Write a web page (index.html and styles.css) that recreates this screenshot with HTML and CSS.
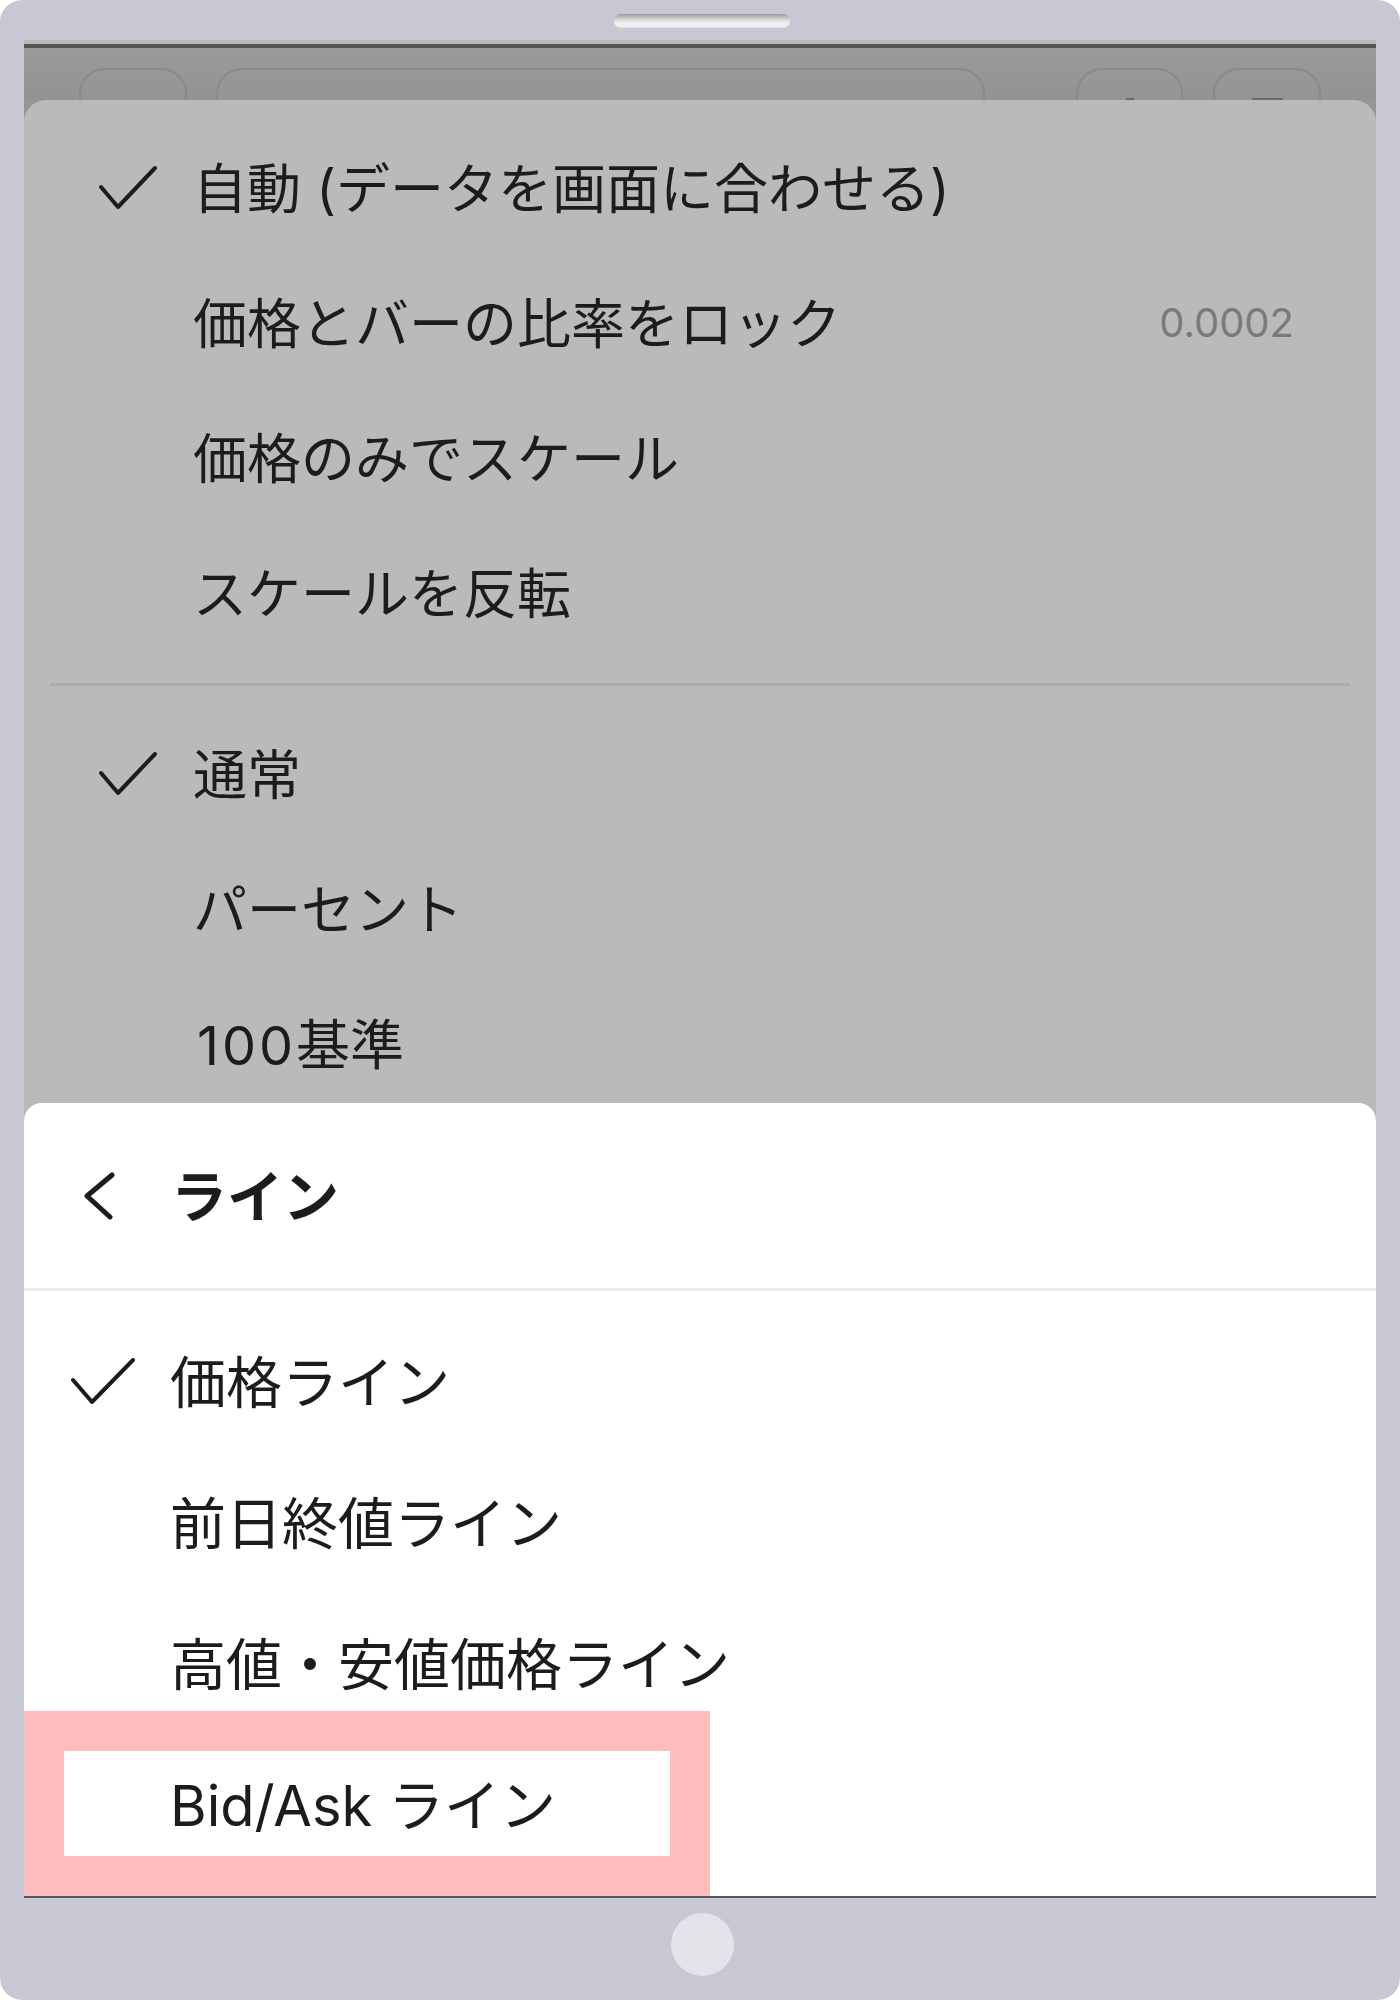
FILE: index.html
```html
<!DOCTYPE html>
<html lang="ja">
<head>
<meta charset="utf-8">
<title>ライン</title>
<link rel="stylesheet" href="styles.css">
</head>
<body>
<div class="device">
  <div class="speaker"></div>
  <div class="screen">
    <div class="status"></div>
    <div class="appbar">
      <div class="abtn"></div>
      <div class="abtn abtn-wide"></div>
      <div class="abtn abtn-push"><span class="mark mark-v"></span></div>
      <div class="abtn abtn-last"><span class="mark mark-h"></span></div>
    </div>
    <div class="panel">
      <div class="row">
        <span class="chk"><svg viewBox="0 0 58 45" width="58" height="45"><path d="M2 22 L19 42 L56 3" fill="none" stroke="#1c1c1c" stroke-width="4" stroke-linecap="round" stroke-linejoin="round"/></svg></span>
        <span class="label">自動 (データを画面に合わせる)</span>
      </div>
      <div class="row">
        <span class="chk"></span>
        <span class="label">価格とバーの比率をロック</span>
        <span class="value">0.0002</span>
      </div>
      <div class="row">
        <span class="chk"></span>
        <span class="label">価格のみでスケール</span>
      </div>
      <div class="row">
        <span class="chk"></span>
        <span class="label">スケールを反転</span>
      </div>
      <div class="sep"></div>
      <div class="row">
        <span class="chk"><svg viewBox="0 0 58 45" width="58" height="45"><path d="M2 22 L19 42 L56 3" fill="none" stroke="#1c1c1c" stroke-width="4" stroke-linecap="round" stroke-linejoin="round"/></svg></span>
        <span class="label">通常</span>
      </div>
      <div class="row">
        <span class="chk"></span>
        <span class="label">パーセント</span>
      </div>
      <div class="row">
        <span class="chk"></span>
        <span class="label"><span class="num">100</span>基準</span>
      </div>
    </div>
    <div class="sheet">
      <div class="sheet-head">
        <svg class="back" viewBox="0 0 34 48" width="34" height="48"><path d="M30 3 L5 24 L28 45" fill="none" stroke="#1c1c1c" stroke-width="5" stroke-linecap="round" stroke-linejoin="round"/></svg>
        <span class="title">ライン</span>
      </div>
      <div class="sheet-sep"></div>
      <div class="sheet-list">
        <div class="srow">
          <span class="schk"><svg viewBox="0 0 64 46" width="64" height="46"><path d="M2 22 L21 44 L62 2" fill="none" stroke="#1c1c1c" stroke-width="4" stroke-linecap="round" stroke-linejoin="round"/></svg></span>
          <span class="slabel">価格ライン</span>
        </div>
        <div class="srow">
          <span class="schk"></span>
          <span class="slabel">前日終値ライン</span>
        </div>
        <div class="srow">
          <span class="schk"></span>
          <span class="slabel">高値・安値価格ライン</span>
        </div>
        <div class="srow">
          <span class="schk"></span>
          <span class="slabel">Bid/Ask ライン</span>
        </div>
      </div>
      <div class="highlight"></div>
    </div>
  </div>
  <div class="home"></div>
</div>
</body>
</html>
```

FILE: styles.css
```css
* { box-sizing: border-box; }

html, body {
  margin: 0;
  padding: 0;
  background: #ffffff;
}

body {
  font-family: Inter, "Noto Sans CJK JP", sans-serif;
  color: #1c1c1c;
}

.device {
  width: 1400px;
  height: 2000px;
  background: #c8c8d4;
  border-radius: 22px;
  padding: 14px 24px 0;
  display: flex;
  flex-direction: column;
  align-items: center;
}

.speaker {
  width: 176px;
  height: 14px;
  border-radius: 7px;
  margin-left: 4px;
  margin-bottom: 12px;
  background: linear-gradient(to bottom, #9c9c9c 0%, #c9c9c9 30%, #eeeeee 60%, #f2f2f2 85%, #dedede 100%);
  flex-shrink: 0;
}

.screen {
  width: 1352px;
  display: flex;
  flex-direction: column;
  position: relative;
  overflow: hidden;
  background: #969696;
  border-bottom: 2px solid #555555;
  flex-shrink: 0;
}

.status {
  height: 4px;
  background: #bababa;
}

.appbar {
  height: 56px;
  border-top: 4px solid #555555;
  padding: 20px 55px 0;
  display: flex;
  align-items: flex-start;
  background: linear-gradient(to bottom, #9a9a9a, #939393);
}

.abtn {
  width: 108px;
  height: 64px;
  border: 2px solid #8a8a8a;
  border-radius: 26px;
  background: linear-gradient(to bottom, #989898, #919191);
  flex-shrink: 0;
  display: flex;
  justify-content: center;
  padding-top: 28px;
}

.abtn-wide {
  width: 769px;
  margin-left: 29px;
}

.abtn-push {
  width: 107px;
  margin-left: auto;
}

.abtn-last {
  margin-left: 30px;
}

.mark {
  display: block;
  background: #6a6a6a;
  height: 6px;
}

.mark-v { width: 8px; }
.mark-h { width: 31px; }

.panel {
  position: relative;
  z-index: 1;
  background: #bababa;
  border-radius: 22px 22px 0 0;
  padding: 20px 82px 20px 75px;
  display: flex;
  flex-direction: column;
}

.row {
  height: 135px;
  display: flex;
  align-items: center;
}

.chk {
  width: 58px;
  height: 45px;
  margin-right: 36px;
  flex-shrink: 0;
  display: flex;
}

.label {
  font-size: 54px;
  font-weight: 400;
  color: #1c1c1c;
  white-space: nowrap;
  line-height: 1;
  padding-top: 4px;
}

.num {
  letter-spacing: 3px;
  padding-left: 4px;
}

.value {
  margin-left: auto;
  font-size: 40px;
  font-weight: 400;
  color: #7a7a7a;
  line-height: 1;
}

.sep {
  height: 3px;
  background: #adadad;
  margin: 23px -56px 20px -49px;
}

.sheet {
  position: relative;
  z-index: 2;
  margin-top: -28px;
  background: #ffffff;
  border-radius: 18px 18px 0 0;
  display: flex;
  flex-direction: column;
}

.sheet-head {
  height: 185px;
  display: flex;
  align-items: center;
  padding-left: 58px;
}

.back {
  flex-shrink: 0;
  margin-right: 55px;
}

.title {
  font-size: 56px;
  font-weight: 700;
  line-height: 1;
  padding-top: 2px;
}

.sheet-sep {
  height: 3px;
  background: #ececec;
}

.sheet-list {
  padding: 19px 0 22px 47px;
  display: flex;
  flex-direction: column;
}

.srow {
  height: 141px;
  display: flex;
  align-items: center;
}

.schk {
  width: 64px;
  height: 46px;
  margin-right: 35px;
  flex-shrink: 0;
  display: flex;
}

.slabel {
  font-size: 56px;
  font-weight: 400;
  line-height: 1;
  white-space: nowrap;
  padding-top: 4px;
}

.highlight {
  position: absolute;
  left: 0;
  bottom: 0;
  width: 686px;
  height: 185px;
  border: 40px solid #ffbcbd;
  pointer-events: none;
}

.home {
  width: 63px;
  height: 63px;
  border-radius: 50%;
  background: #e3e3ea;
  margin-top: 15px;
  margin-left: 4px;
  flex-shrink: 0;
}
```
